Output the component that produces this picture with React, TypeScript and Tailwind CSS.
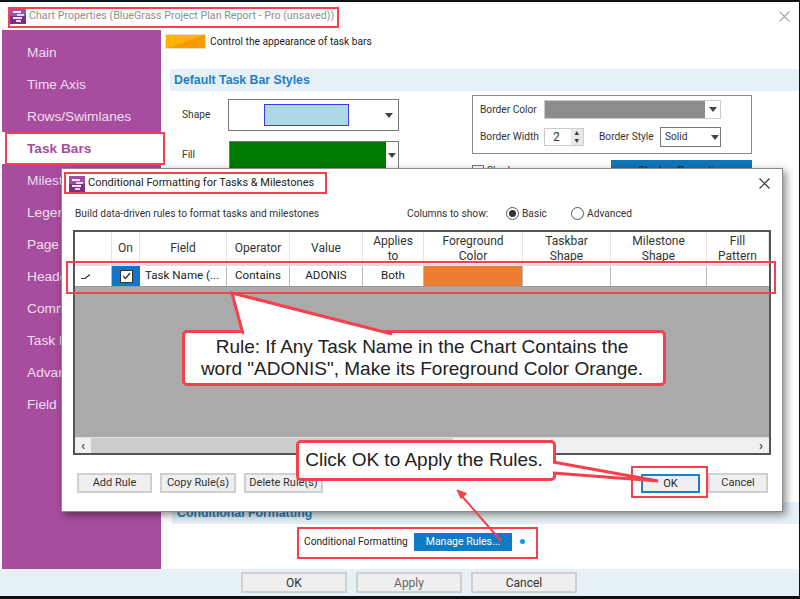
const sideItems = ['Main', 'Time Axis', 'Rows/Swimlanes', 'Task Bars', 'Milestones', 'Legend', 'Page Layout', 'Header', 'Comments', 'Task Notes', 'Advanced', 'Field Info'];

const columns = [
  { label: 'Field', cls: 'w-[87px]' },
  { label: 'Operator', cls: 'w-[63px]' },
  { label: 'Value', cls: 'w-[73px]' },
  { label: 'Applies to', cls: 'w-[61px]' },
  { label: 'Foreground Color', cls: 'w-[99px]' },
  { label: 'Taskbar Shape', cls: 'w-[88px]' },
  { label: 'Milestone Shape', cls: 'w-[96px]' },
  { label: 'Fill Pattern', cls: 'flex-1' },
];

const oneLine = ['Field', 'Operator', 'Value'];

function AppIcon() {
  return (
    <svg width="16" height="16" viewBox="0 0 16 16" className="shrink-0">
      <rect width="16" height="16" fill="#a24fa6" />
      <rect x="0" y="8" width="16" height="8" fill="#7b3180" />
      <rect x="3" y="3" width="8" height="2" fill="#f7e6f7" />
      <rect x="7" y="6" width="7" height="2" fill="#f1d5f0" />
      <rect x="3" y="9" width="9" height="2" fill="#f7e6f7" />
      <rect x="6" y="12" width="5" height="2" fill="#f1d5f0" />
    </svg>
  );
}

function Caret({ className = '' }: { className?: string }) {
  return (
    <svg width="8" height="5" viewBox="0 0 8 5" className={className}>
      <path d="M0 0h8L4 5z" fill="#444" />
    </svg>
  );
}

function WinButton({ label, cls }: { label: string; cls: string }) {
  return (
    <button className={`h-[20px] border-2 border-[#d0d0d0] bg-[#efefef] text-[11px] text-[#333] flex items-center justify-center ${cls}`}>
      {label}
    </button>
  );
}

function Radio({ checked, label }: { checked?: boolean; label: string }) {
  return (
    <div className="flex items-center gap-[3px]">
      <span className="w-[13px] h-[13px] rounded-full border border-[#555] bg-white flex items-center justify-center">
        {checked && <span className="w-[7px] h-[7px] rounded-full bg-[#333]" />}
      </span>
      <span>{label}</span>
    </div>
  );
}

function Dialog() {
  return (
    <div className="absolute left-[61px] top-[168px] w-[722px] h-[344px] bg-white border border-[#8a8a8a] shadow-[3px_3px_8px_rgba(0,0,0,0.45)] flex flex-col">
      <div className="h-[29px] shrink-0 flex items-center pl-[7px] pr-[12px] gap-[3px] text-[11px] text-[#222]">
        <AppIcon />
        <span className="flex-1">Conditional Formatting for Tasks &amp; Milestones</span>
        <svg width="11" height="11" viewBox="0 0 11 11"><path d="M0.5 0.5l10 10M10.500 0.5l-10 10" stroke="#333" strokeWidth="1.2" /></svg>
      </div>
      <div className="h-[32px] shrink-0 flex items-center pl-[13px] text-[10.2px] text-[#333]">
        <span className="w-[332px]">Build data-driven rules to format tasks and milestones</span>
        <span className="w-[99px]">Columns to show:</span>
        <div className="w-[65px]"><Radio checked label="Basic" /></div>
        <Radio label="Advanced" />
      </div>
      <div className="mx-[11px] h-[225px] shrink-0 border-2 border-[#555] flex flex-col bg-[#aaaaaa]">
        <div className="h-[34px] shrink-0 bg-white flex border-b-2 border-[#ddd] text-[12px] leading-[15px] text-[#333]">
          <div className="w-[37px] border-r border-[#e4e4e4]" />
          <div className="w-[28px] border-r border-[#e4e4e4] flex items-center justify-center">On</div>
          {columns.map((c) => (
            <div key={c.label} className={`${c.cls} border-r border-[#e4e4e4] h-[32px] overflow-hidden text-center px-[6px] ${oneLine.includes(c.label) ? 'flex items-center justify-center' : 'pt-[2px]'}`}>
              {c.label}
            </div>
          ))}
        </div>
        <div className="h-[21px] shrink-0 bg-white flex border-b border-[#999] text-[11.6px] text-[#222]">
          <div className="w-[37px] border-r border-[#bbb] flex items-center pl-[6px]">
            <svg width="9" height="5" viewBox="0 0 9 5"><path d="M0 4.500h4L9 0.5" stroke="#333" strokeWidth="1.2" fill="none" /></svg>
          </div>
          <div className="w-[28px] bg-[#0f76cf] flex items-center justify-center">
            <span className="w-[13px] h-[13px] bg-white border border-[#333] flex items-center justify-center">
              <svg width="9" height="8" viewBox="0 0 9 8"><path d="M1 4l2.500 2.500L8 1" stroke="#333" strokeWidth="1.3" fill="none" /></svg>
            </span>
          </div>
          <div className="w-[87px] border-r border-[#bbb] flex items-center pl-[5px] whitespace-nowrap">Task Name (...</div>
          <div className="w-[63px] border-r border-[#bbb] flex items-center justify-center">Contains</div>
          <div className="w-[73px] border-r border-[#bbb] flex items-center justify-center">ADONIS</div>
          <div className="w-[61px] border-r border-[#bbb] flex items-center justify-center">Both</div>
          <div className="w-[99px] border-r border-[#bbb] bg-[#ed7d31]" />
          <div className="w-[88px] border-r border-[#bbb]" />
          <div className="w-[96px] border-r border-[#bbb]" />
          <div className="flex-1" />
        </div>
        <div className="flex-1" />
        <div className="h-[16px] shrink-0 bg-[#f0f0f0] flex items-center border-t border-[#ddd]">
          <div className="w-[16px] text-center text-[13px] font-bold text-[#444] leading-none">‹</div>
          <div className="flex-1 h-full bg-[#cdcdcd]" />
          <div className="w-[300px] h-full" />
          <div className="w-[16px] text-center text-[13px] font-bold text-[#444] leading-none">›</div>
        </div>
      </div>
      <div className="flex items-center pl-[15px] pr-[14px] mt-[18px] gap-[8px]">
        <WinButton label="Add Rule" cls="w-[75px]" />
        <WinButton label="Copy Rule(s)" cls="w-[76px]" />
        <WinButton label="Delete Rule(s)" cls="w-[79px]" />
        <div className="flex-1" />
        <button className="w-[59px] h-[19px] border-2 border-[#1a7fd0] bg-[#efefef] text-[11px] text-[#222]">OK</button>
        <WinButton label="Cancel" cls="w-[60px]" />
      </div>
    </div>
  );
}

function Annotations() {
  return (
    <>
      <div className="absolute left-[8px] top-[7px] w-[331px] h-[21px] border-2 border-[#f5414b]" />
      <div className="absolute left-[5px] top-[132px] w-[160px] h-[33px] border-2 border-[#f5414b]" />
      <div className="absolute left-[64px] top-[172px] w-[263px] h-[22px] border-2 border-[#f5414b]" />
      <div className="absolute left-[66px] top-[261px] w-[710px] h-[33px] border-2 border-[#f5414b]" />
      <div className="absolute left-[631px] top-[466px] w-[77px] h-[32px] border-2 border-[#f5414b]" />
      <div className="absolute left-[297px] top-[527px] w-[241px] h-[32px] border-2 border-[#f5414b]" />

      {/* manage rules arrow */}
      <svg className="absolute left-0 top-0" width="800" height="599" viewBox="0 0 800 599">
        <path d="M501 541L461 495" stroke="#f5414b" strokeWidth="2" />
        <path d="M457 490l9.500 3.500-5.500 5z" fill="#f5414b" stroke="#f5414b" />
      </svg>

      {/* rule callout */}
      <div className="absolute left-[182px] top-[330px] w-[484px] h-[56px] pr-[4px] bg-white border-[3px] border-[#f5414b] rounded-[5px] flex items-center justify-center text-center text-[19px] leading-[22px] text-[#222] font-['Liberation_Sans',sans-serif]">
        <div>Rule: If Any Task Name in the Chart Contains the<br />word "ADONIS", Make its Foreground Color Orange.</div>
      </div>
      <svg className="absolute left-0 top-0" width="800" height="599" viewBox="0 0 800 599">
        <path d="M243 334L232 293L392 334" fill="#fff" stroke="#f5414b" strokeWidth="3" />
      </svg>

      {/* ok callout */}
      <div className="absolute left-[296px] top-[440px] w-[260px] h-[41px] pr-[4px] bg-white border-[3px] border-[#f5414b] rounded-[5px] flex items-center justify-center text-[19px] text-[#222] font-['Liberation_Sans',sans-serif]">
        Click OK to Apply the Rules.
      </div>
      <svg className="absolute left-0 top-0" width="800" height="599" viewBox="0 0 800 599">
        <path d="M553 462L658 481L553 473" fill="#fff" stroke="#f5414b" strokeWidth="3" />
      </svg>
    </>
  );
}

export default function App() {
  return (
    <div className="relative w-[800px] h-[599px] overflow-hidden bg-[#111] pt-[2px] pb-[3px] pr-[1px] flex flex-col font-['Roboto',sans-serif]">
      <div className="h-[28px] shrink-0 bg-white flex items-center pl-[10px] pr-[9px] gap-[3px] text-[10.7px] text-[#8f8f8f]">
        <AppIcon />
        <span className="flex-1">Chart Properties (BlueGrass Project Plan Report - Pro (unsaved))</span>
        <svg width="11" height="11" viewBox="0 0 11 11"><path d="M0.5 0.5l10 10M10.500 0.5l-10 10" stroke="#aaa" strokeWidth="1.2" /></svg>
      </div>

      <div className="flex-1 flex bg-white pl-[2px] min-h-0">
        <div className="w-[159px] bg-[#a64d9e] flex flex-col pt-[6px] font-['Liberation_Sans',sans-serif]">
          {sideItems.map((item) => (
            <div
              key={item}
              className={item === 'Task Bars'
                ? 'h-[32px] shrink-0 flex items-center pl-[25px] pt-[2px] text-[13.7px] bg-white text-[#a64d9e] font-bold'
                : 'h-[32px] shrink-0 flex items-center pl-[25px] pt-[2px] text-[13.7px] text-[#f1dff0]'}
            >
              {item}
            </div>
          ))}
        </div>

        <div className="flex-1 flex flex-col pl-[4px] text-[10.2px] text-[#333]">
          <div className="h-[39px] shrink-0 flex items-start pt-[4px]">
            <div className="w-[41px] h-[15px] bg-[linear-gradient(160deg,#ffb400_50%,#f59a00_50%)] border border-[#e8e0c8]" />
            <span className="ml-[4px] leading-[15px] text-[#222]">Control the appearance of task bars</span>
          </div>
          <div className="h-[22px] shrink-0 ml-[5px] bg-[#e6f1f5] flex items-center pl-[4px] text-[#1f7fc4] font-bold text-[12.3px] font-['Liberation_Sans',sans-serif]">Default Task Bar Styles</div>

          <div className="flex mt-[4px] h-[73px] shrink-0">
            <div className="w-[234px] pl-[17px] flex flex-col">
              <div className="flex items-center h-[32px] mt-[4px]">
                <span className="w-[47px]">Shape</span>
                <div className="w-[172px] h-[32px] border border-[#777] bg-white flex items-center pl-[35px]">
                  <div className="w-[85px] h-[22px] bg-[#add8e6] border border-[#3a3ae0]" />
                  <Caret className="ml-[36px]" />
                </div>
              </div>
              <div className="flex items-center h-[28px] mt-[10px]">
                <span className="w-[47px]">Fill</span>
                <div className="w-[172px] h-[28px] border border-[#777] bg-white flex">
                  <div className="w-[156px] bg-[#007a00]" />
                  <div className="flex-1 flex items-center justify-center"><Caret /></div>
                </div>
              </div>
            </div>
            <div className="ml-[73px] w-[280px]">
              <div className="h-[59px] border border-[#888] pl-[7px] pt-[4px] flex flex-col gap-[9px]">
                <div className="flex items-center h-[19px]">
                  <span className="w-[64px] whitespace-nowrap">Border Color</span>
                  <div className="w-[177px] h-[19px] border border-[#ccc] flex">
                    <div className="w-[160px] bg-[#8c8c8c]" />
                    <div className="flex-1 flex items-center justify-center"><Caret /></div>
                  </div>
                </div>
                <div className="flex items-center h-[18px]">
                  <span className="w-[64px] whitespace-nowrap">Border Width</span>
                  <div className="w-[40px] h-[18px] border border-[#ccc] flex items-center pl-[8px] text-[12px]">
                    2
                    <div className="ml-[11px] text-[7px] leading-[8px] text-center w-[12px] bg-[#e8e8e8]">▲<br />▼</div>
                  </div>
                  <span className="ml-[15px] w-[61px] whitespace-nowrap">Border Style</span>
                  <div className="w-[61px] h-[20px] border border-[#777] flex items-center pl-[4px]">
                    Solid<Caret className="ml-[23px]" />
                  </div>
                </div>
              </div>
              <div className="flex items-center mt-[6px]">
                <span className="w-[12px] h-[12px] border border-[#777]" />
                <span className="ml-[3px]">Shadow</span>
                <button className="ml-auto w-[141px] h-[22px] bg-[#0f76b8] text-[#123] text-center">Shadow Properties</button>
              </div>
            </div>
          </div>

          <div className="flex-1" />
          <div className="h-[22px] shrink-0 ml-[7px] mb-[3px] bg-[#e6f1f5] flex items-center pl-[5px] text-[#1f7fc4] font-bold text-[12.3px] font-['Liberation_Sans',sans-serif]">Conditional Formatting</div>
          <div className="h-[42px] shrink-0 flex items-start pl-[139px] pt-[6px]">
            <span className="w-[110px] leading-[18px] whitespace-nowrap text-[#222]">Conditional Formatting</span>
            <button className="w-[98px] h-[18px] bg-[#0f7bc4] text-white text-[10.5px] whitespace-nowrap">Manage Rules...</button>
            <span className="ml-[8px] mt-[6px] w-[5px] h-[5px] rounded-full bg-[#0a9be8]" />
          </div>
        </div>
      </div>

      <div className="h-[27px] shrink-0 bg-[#e6f1f5] flex items-center pl-[241px] gap-[9px]">
        <WinButton label="OK" cls="w-[106px] !h-[21px] !text-[12px]" />
        <WinButton label="Apply" cls="w-[106px] !h-[21px] !text-[12px] !text-[#666]" />
        <WinButton label="Cancel" cls="w-[106px] !h-[21px] !text-[12px]" />
      </div>

      <Dialog />
      <Annotations />
    </div>
  );
}
